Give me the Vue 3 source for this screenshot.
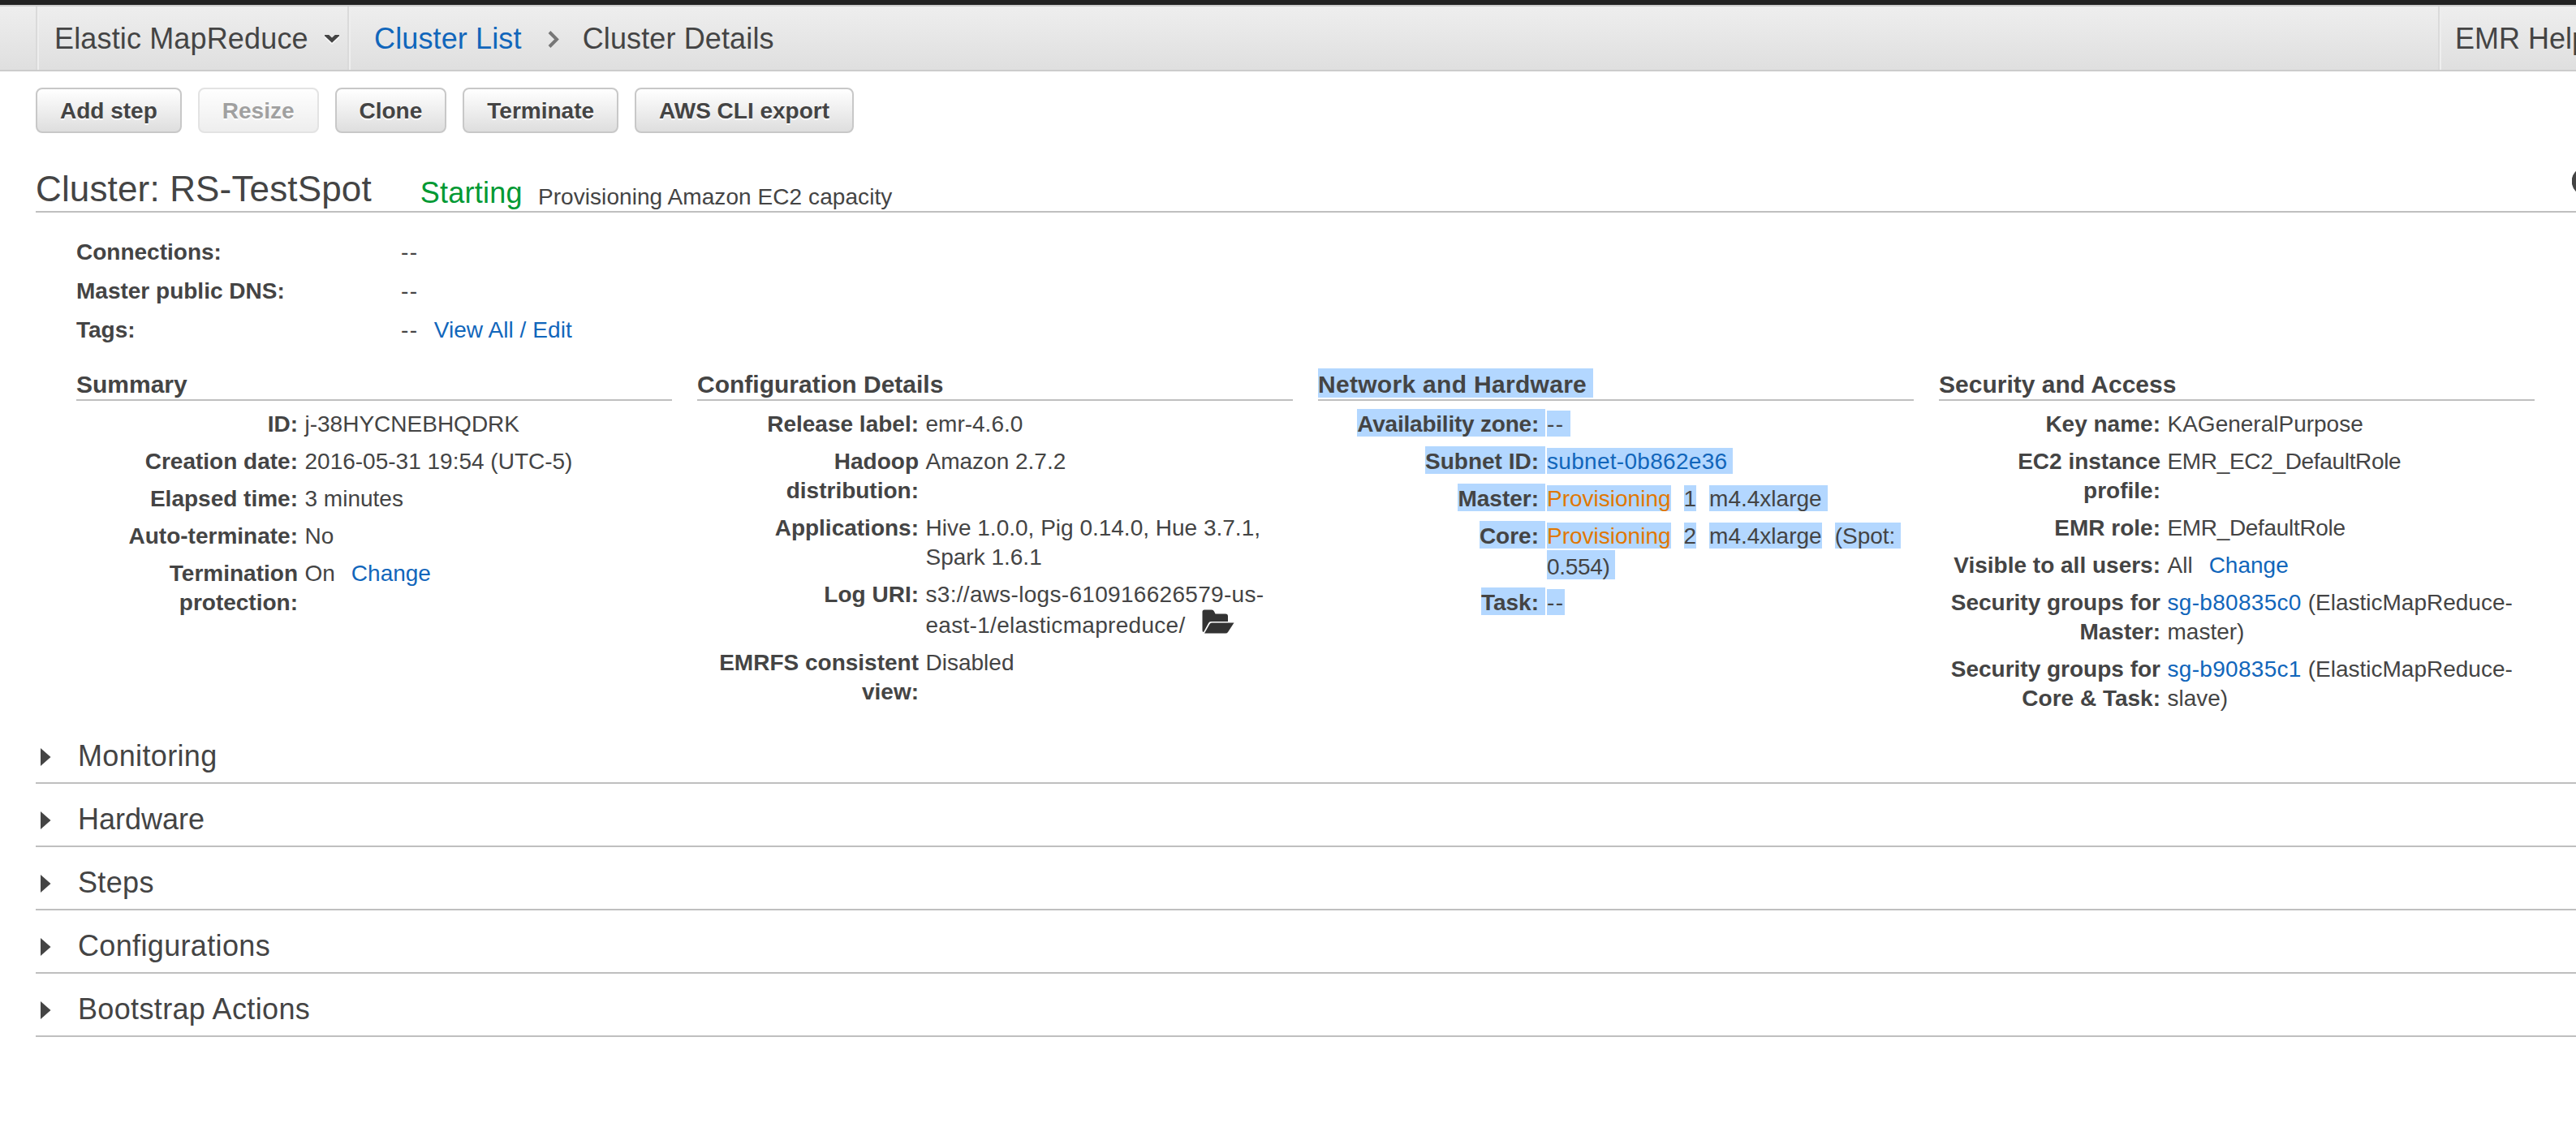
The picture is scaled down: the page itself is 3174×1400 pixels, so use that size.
<script setup>
const buttons = [
  { label: 'Add step' },
  { label: 'Resize', disabled: true },
  { label: 'Clone' },
  { label: 'Terminate' },
  { label: 'AWS CLI export' },
]

const meta = [
  { label: 'Connections:' },
  { label: 'Master public DNS:' },
  { label: 'Tags:', link: 'View All / Edit' },
]

// Each value is a list of lines, each line a list of text runs.
const columns = [
  {
    title: 'Summary',
    rows: [
      { label: ['ID:'], value: [[{ t: 'j-38HYCNEBHQDRK' }]] },
      { label: ['Creation date:'], value: [[{ t: '2016-05-31 19:54 (UTC-5)' }]] },
      { label: ['Elapsed time:'], value: [[{ t: '3 minutes' }]] },
      { label: ['Auto-terminate:'], value: [[{ t: 'No' }]] },
      { label: ['Termination', 'protection:'], value: [[{ t: 'On' }, { t: 'Change', c: 'link wide' }]] },
    ],
  },
  {
    title: 'Configuration Details',
    rows: [
      { label: ['Release label:'], value: [[{ t: 'emr-4.6.0' }]] },
      { label: ['Hadoop', 'distribution:'], value: [[{ t: 'Amazon 2.7.2' }]] },
      { label: ['Applications:'], value: [[{ t: 'Hive 1.0.0, Pig 0.14.0, Hue 3.7.1,' }], [{ t: 'Spark 1.6.1' }]] },
      { label: ['Log URI:'], value: [[{ t: 's3://aws-logs-610916626579-us-', c: 'loose' }], [{ t: 'east-1/elasticmapreduce/', c: 'loose' }, { icon: 'folder' }]] },
      { label: ['EMRFS consistent', 'view:'], value: [[{ t: 'Disabled' }]] },
    ],
  },
  {
    title: 'Network and Hardware',
    selected: true,
    rows: [
      { label: ['Availability zone:'], labelClass: 'tight', value: [[{ t: '--', c: 'dashes tail' }]] },
      { label: ['Subnet ID:'], value: [[{ t: 'subnet-0b862e36', c: 'link loose tail' }]] },
      { label: ['Master:'], value: [[{ t: 'Provisioning', c: 'pending' }, { t: '1', c: 'gap' }, { t: 'm4.4xlarge', c: 'gap tail' }]] },
      { label: ['Core:'], value: [[{ t: 'Provisioning', c: 'pending' }, { t: '2', c: 'gap' }, { t: 'm4.4xlarge', c: 'gap' }, { t: '(Spot:', c: 'gap tail' }], [{ t: '0.554)', c: 'snug joined' }]] },
      { label: ['Task:'], value: [[{ t: '--', c: 'dashes' }]] },
    ],
  },
  {
    title: 'Security and Access',
    rows: [
      { label: ['Key name:'], value: [[{ t: 'KAGeneralPurpose' }]] },
      { label: ['EC2 instance', 'profile:'], value: [[{ t: 'EMR_EC2_DefaultRole', c: 'snug' }]] },
      { label: ['EMR role:'], value: [[{ t: 'EMR_DefaultRole', c: 'snug' }]] },
      { label: ['Visible to all users:'], value: [[{ t: 'All' }, { t: 'Change', c: 'link wide' }]] },
      { label: ['Security groups for', 'Master:'], value: [[{ t: 'sg-b80835c0', c: 'link loose' }, { t: '(ElasticMapReduce-', c: 'space' }], [{ t: 'master)' }]] },
      { label: ['Security groups for', 'Core & Task:'], value: [[{ t: 'sg-b90835c1', c: 'link loose' }, { t: '(ElasticMapReduce-', c: 'space' }], [{ t: 'slave)' }]] },
    ],
  },
]

const sections = ['Monitoring', 'Hardware', 'Steps', 'Configurations', 'Bootstrap Actions']
</script>

<template>
  <div class="page">
    <header class="topbar">
      <div class="service">
        <span>Elastic MapReduce</span>
        <svg class="caret" width="18" height="12" viewBox="0 0 18 12"><path d="M0 2.5V1h5l4 3.6L13 1h5v1.5L9 11Z" fill="#fff" opacity=".7" transform="translate(0 1)" /><path d="M0 1.2V0h5.2L9 3.6 12.8 0H18v1.2L9 9.8Z" fill="#444" /></svg>
      </div>
      <nav class="crumbs">
        <a class="link">Cluster List</a>
        <svg class="chevron" width="14" height="24" viewBox="0 0 14 24"><path d="M2 2.5 L11 11.5 L2 20.5" fill="none" stroke="#777" stroke-width="4" /></svg>
        <span>Cluster Details</span>
      </nav>
      <div class="help">EMR Help</div>
    </header>

    <div class="actions">
      <button v-for="b in buttons" :key="b.label" :disabled="b.disabled">{{ b.label }}</button>
    </div>

    <div class="heading">
      <h1>Cluster: RS-TestSpot</h1>
      <span class="state">Starting</span>
      <span class="reason">Provisioning Amazon EC2 capacity</span>
      <svg class="refresh" width="36" height="36" viewBox="0 0 36 36"><path d="M29.5 10A14.5 14.5 0 1 0 32 21" fill="none" stroke="#444" stroke-width="7" /><path d="M36 2V16H22Z" fill="#444" /></svg>
    </div>

    <div class="meta">
      <div v-for="m in meta" :key="m.label" class="meta-row">
        <b>{{ m.label }}</b>
        <span class="dashes">--</span>
        <a v-if="m.link" class="link">{{ m.link }}</a>
      </div>
    </div>

    <div class="columns">
      <section v-for="col in columns" :key="col.title" :class="{ selected: col.selected }">
        <h2><span>{{ col.title }}</span></h2>
        <div v-for="(row, i) in col.rows" :key="i" class="row">
          <div class="label" :class="row.labelClass">
            <div v-for="l in row.label" :key="l"><span>{{ l }}</span></div>
          </div>
          <div class="value">
            <div v-for="(line, j) in row.value" :key="j" class="line" :class="{ 'with-icon': line.some(r => r.icon) }">
              <template v-for="(r, k) in line" :key="k">
                <svg v-if="r.icon" class="folder" width="40" height="30" viewBox="0 0 40 30">
                  <path d="M.5 26V3Q.5.5 3 .5H12Q14 .5 15 2.500L16.500 5.500H29Q32 5.500 32 8.500V15H11Q9 15 8 17L2 28Q.5 28 .5 26Z" fill="#333" />
                  <path d="M3 29.500L9.500 18Q10.300 16.500 12 16.500H39.500L32 28Q31 29.500 29 29.500Z" fill="#333" />
                </svg>
                <span v-else :class="r.c">{{ r.t }}</span>
              </template>
            </div>
          </div>
        </div>
      </section>
    </div>

    <div class="sections">
      <div v-for="s in sections" :key="s" class="section">
        <svg width="13" height="22" viewBox="0 0 13 22"><path d="M0 0L12.5 11L0 22Z" fill="#444" /></svg>
        <span>{{ s }}</span>
      </div>
    </div>
  </div>
</template>

<style>
body { background: #fff; }
</style>

<style scoped>
.page {
  width: 100%;
  height: 1400px;
  overflow: hidden;
  box-sizing: border-box;
  font: 28px/36px "Liberation Sans", Arial, sans-serif;
  color: #444;
  white-space: nowrap;
}
.link { color: #1166bb; }

.topbar {
  display: flex;
  height: 78px;
  padding-left: 44px;
  border-top: 2px solid #ccc;
  border-bottom: 2px solid #ccc;
  box-shadow: 0 -6px 0 #222;
  margin-top: 6px;
  background: linear-gradient(#eee, #dfdfdf);
  font-size: 36px;
  line-height: 76px;
}
.service {
  display: flex;
  align-items: center;
  box-sizing: border-box;
  width: 388px;
  padding: 2px 0 0 21px;
  border-left: 2px solid #dadada;
  border-right: 2px solid #eee;
  box-shadow: inset 2px 0 0 #eee, inset -2px 0 0 #dadada;
  letter-spacing: .15px;
}
.caret { margin: 2px 0 0 20px; }
.crumbs { display: flex; align-items: center; padding: 2px 0 0 29px; letter-spacing: .13px; }
.chevron { margin: 2px 29px 0 32px; }
.help {
  margin-left: auto;
  width: 149px;
  padding: 2px 0 0 19px;
  border-left: 2px solid #dadada;
  box-shadow: inset 2px 0 0 #eee;
}

.actions { display: flex; gap: 20px; padding: 20px 44px 0; }
button {
  box-sizing: border-box;
  height: 56px;
  padding: 2px 28px 0;
  border: 2px solid #c8c8c8;
  border-radius: 8px;
  background: linear-gradient(#fff, #dedede);
  color: #444;
  font: bold 28px/50px "Liberation Sans", Arial, sans-serif;
  text-shadow: 0 2px 0 #fff;
}
button:disabled { opacity: .5; }

.heading {
  display: flex;
  align-items: flex-end;
  height: 96px;
  margin-left: 44px;
  border-bottom: 2px solid #bfbfbf;
  line-height: 40px;
}
h1 { margin: 0 60px 7px 0; font-size: 44px; font-weight: normal; line-height: 40px; letter-spacing: .15px; }
.state { margin: 0 19px 2px 0; font-size: 36px; letter-spacing: .25px; color: #093; }
.reason { margin-bottom: -3px; letter-spacing: .07px; }
.refresh { margin: 0 -31px 19px auto; flex: none; }

.meta { padding: 25px 0 0 94px; }
.meta-row { display: flex; line-height: 48px; }
.meta-row b { width: 400px; }
.meta-row .link { margin-left: 19px; letter-spacing: .07px; }
.dashes { letter-spacing: 1.5px; }

.columns { display: grid; grid-template-columns: repeat(4, 734px); gap: 31px; padding: 25px 0 0 94px; height: 422px; }
h2 { margin: 0; height: 36px; border-bottom: 2px solid #bfbfbf; font-size: 30px; line-height: 36px; }
.row { display: flex; margin-top: 10px; }
h2 + .row { margin-top: 11px; }
.label { width: 273px; margin-right: 8.5px; font-weight: bold; text-align: right; }
.tight { letter-spacing: -.22px; }
.line { display: flex; height: 36px; }
.with-icon { padding-top: 2px; }
.wide { margin-left: 20px; }
.gap { margin-left: 16px; }
.space { margin-left: 8px; }
.loose { letter-spacing: .3px; }
.snug { letter-spacing: -.33px; }
.pending { color: #e07700; }
.folder { margin: -2px 0 0 20px; }

.selected h2 { letter-spacing: .3px; }
.selected h2 span { padding: 3px 8px 0 0; background: #b3d7ff; }
.selected .label { width: 280px; margin-right: 2px; }
.selected .label span { padding: 3px 8px 0 0; background: #b3d7ff; }
.selected .line span { height: 32px; line-height: 34px; margin-top: 1px; background: #b3d7ff; }
.selected .line .joined { height: 36px; line-height: 41px; margin-top: -1px; padding-right: 7px; }
.tail { padding-right: 7px; }

.sections { margin-left: 44px; padding-top: 10px; }
.section {
  display: flex;
  align-items: center;
  height: 65px;
  padding: 11px 0 0 6px;
  border-bottom: 2px solid #bfbfbf;
  font-size: 36px;
  line-height: 65px;
  letter-spacing: .35px;
}
.section svg { margin: 3px 33px 0 0; }
.section:nth-child(2) span { letter-spacing: 0; }
</style>
